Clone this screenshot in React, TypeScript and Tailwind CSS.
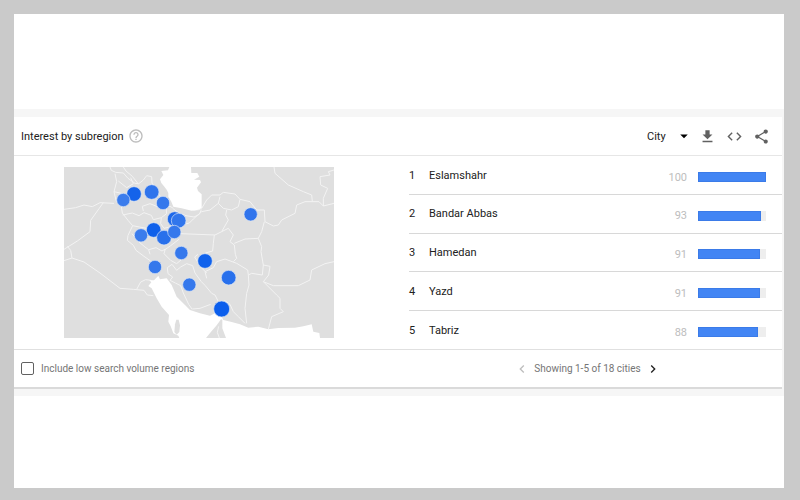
import { useState } from "react";
import {
  MdArrowDropDown,
  MdChevronLeft,
  MdChevronRight,
  MdCode,
  MdFileDownload,
  MdHelpOutline,
  MdShare,
} from "react-icons/md";

interface City {
  rank: number;
  name: string;
  value: number;
}

const cities: City[] = [
  { rank: 1, name: "Eslamshahr", value: 100 },
  { rank: 2, name: "Bandar Abbas", value: 93 },
  { rank: 3, name: "Hamedan", value: 91 },
  { rank: 4, name: "Yazd", value: 91 },
  { rank: 5, name: "Tabriz", value: 88 },
];

// x, y, radius, fill
const markers: [number, number, number, string][] = [
  [210, 81, 22, "#1463ea"],
  [178, 99, 20, "#3b7cec"],
  [263, 75, 22, "#2f74ec"],
  [297, 108, 20, "#3578ec"],
  [332, 156, 22, "#1f69ea"],
  [344, 161, 22, "#3176ec"],
  [269, 189, 22, "#0f60ea"],
  [231, 205, 20, "#3b7cec"],
  [300, 212, 22, "#2970eb"],
  [331, 195, 20, "#3578ec"],
  [352, 258, 20, "#3578ec"],
  [273, 300, 20, "#3578ec"],
  [376, 353, 20, "#3578ec"],
  [423, 282, 22, "#1062ec"],
  [494, 332, 22, "#2870ec"],
  [473, 426, 24, "#0b5eec"],
  [560, 142, 20, "#3074ec"],
];

const water = [
  "M316 0 L312 10 L292 12 L298 24 L288 37 L292 48 L300 58 L308 68 L313 78 L313 89 L322 104 L328 119 L353 124 L383 131 L402 128 L413 123 L413 82 L402 72 L399 62 L411 46 L408 39 L390 38 L406 29 L400 18 L382 18 L381 0 Z",
  "M283 326 L288 337 L308 334 L323 354 L338 389 L363 414 L378 429 L408 439 L438 446 L453 439 L473 449 L478 459 L503 465 L528 472 L553 482 L583 479 L613 487 L643 483 L693 482 L718 478 L743 472 L748 494 L766 498 L768 513 L346 513 L343 506 L328 499 L320 478 L313 464 L315 444 L293 419 L278 394 L263 364 L253 357 L262 346 L256 340 L270 340 Z",
];

const islands = [
  "M333 472 L337 458 L344 458 L348 475 L346 495 L338 503 L331 495 Z",
  "M426 513 L440 496 L458 475 L471 457 L475 458 L475 484 L486 513 Z",
];

const borders = [
  "M138 0 L142 10 L155 16 L178 18 L192 34 L213 49 L223 50",
  "M178 0 L186 12 L205 28 L223 51 L238 39 L248 26 L263 29 L264 48 L280 76 L292 92",
  "M153 20 L158 44 L150 74 L156 100 L172 118 L175 138 L192 160 L206 176 L192 205 L190 220 L208 235 L216 250 L240 268 L260 282",
  "M163 42 L188 62 L208 50 L200 32 M150 74 L176 80",
  "M0 127 L35 122 L60 114 L85 119 L108 107 L150 109",
  "M0 247 L40 222 L78 194 L80 160 L105 125 L118 107",
  "M10 238 L20 250 L24 273 L60 285 L108 318 L168 364 L208 367 L240 370 L250 384 L268 386",
  "M0 281 L24 273",
  "M218 367 L230 345 L245 338 L262 340",
  "M176 144 L205 138 L225 146 L240 137 L262 145 L268 158 L292 152 L308 140 L306 122",
  "M238 132 L235 118 L258 110 L288 122 L318 118 L328 124",
  "M206 176 L226 180 L248 184 M204 200 L224 224 L243 240 L254 248 L276 242 L294 252 L304 246",
  "M254 248 L258 262 M292 152 L290 170 L300 184 L318 180",
  "M300 250 L320 236 L346 216 M304 246 L300 260 L320 280 L338 290 L352 278",
  "M328 126 L345 138 L366 146 L390 150 L406 142 L412 128",
  "M388 156 L376 168 L360 172",
  "M310 302 L324 292 L338 310 L350 300 L368 290 L386 296 L393 318 L412 344 L423 355 L443 379 L453 384 L462 402",
  "M310 302 L312 320 L326 330 L318 340 L334 348 L350 356 L358 378 L374 412 L384 426",
  "M385 426 L408 424 L440 412 M481 400 L498 412 L508 434 L523 449 L543 469",
  "M388 156 L413 134 L438 129 L463 109 L468 89 M388 130 L405 128 L413 124 L428 99 L443 84 L468 84 L478 76 L513 81 L528 97 L558 104 L578 129 L601 129 L603 164 L628 177 L643 174 L653 159 L693 139 L698 114 L723 104 L765 104 L778 117 L810 109",
  "M463 109 L478 124 L503 129 L523 119 L528 97",
  "M630 0 L633 19 L673 54 L718 74 L743 84 L745 104",
  "M810 9 L793 14 L798 24 L768 29 L770 54 L791 64 L778 94 L778 117",
  "M488 129 L485 144 L493 159 L473 194 L453 204 L350 200",
  "M473 194 L493 184 L508 204 L498 224 L511 234 L514 262 L518 274 L508 284",
  "M511 229 L543 216 L583 214 L593 194 L601 164 M583 214 L593 239 L591 254 L598 294 L618 298 L614 324 L598 344 L628 356 L703 356 L738 339 L743 309 L783 290 L810 284",
  "M451 204 L448 229 L446 252 L424 258 M402 262 L392 270 L410 300 L428 318",
  "M598 344 L638 384 L648 394 L648 424 L658 434 L623 449 L613 487",
  "M598 294 L595 324 L563 319 L553 324 L551 309 L518 289 L483 276 L458 284 L448 302 L423 314 L428 334",
  "M553 324 L555 354 L548 379 L543 424 L548 469",
];

const RegionMap = () => (
  <svg
    viewBox="0 0 810 513"
    role="img"
    aria-label="Interest by city"
    className="w-full max-w-[270px]"
  >
    <rect width="810" height="513" fill="#dfdfdf" />
    <g fill="none" stroke="#f3f3f3" strokeWidth="3" strokeLinejoin="round">
      {borders.map((d) => (
        <path key={d} d={d} />
      ))}
    </g>
    {water.map((d) => (
      <path key={d} d={d} fill="#fff" />
    ))}
    {islands.map((d) => (
      <path key={d} d={d} fill="#dfdfdf" />
    ))}
    <path d="M464 478 L460 496 L466 513" fill="none" stroke="#f3f3f3" strokeWidth="3" />
    {markers.map(([x, y, r, fill]) => (
      <circle
        key={`${x}-${y}`}
        cx={x}
        cy={y}
        r={r}
        fill={fill}
        stroke="#dce6f5"
        strokeWidth="2"
      />
    ))}
  </svg>
);

const CityRow = ({ rank, name, value }: City) => (
  <tr className="border-b border-[#d8d8d8] last:border-b-0">
    <td className="w-5 pt-[2px]">{rank}</td>
    <td className="pt-[2px]">{name}</td>
    <td className="pt-[6px] pr-[11px] text-right text-[#bdbdbd]">{value}</td>
    <td className="w-[84px] pt-1 pr-4">
      <div className="h-[10px] bg-[#eeeeee]">
        <div
          className="h-full border border-[#3b7be8] bg-[#4285f4]"
          style={{ width: `${value}%` }}
        />
      </div>
    </td>
  </tr>
);

export default function App() {
  const [resolution, setResolution] = useState("City");
  const [lowVolume, setLowVolume] = useState(false);

  return (
    <div className="flex min-h-screen bg-[#cacaca] pt-[14px] pr-4 pb-3 pl-[14px] font-[Roboto,sans-serif] text-[#212121]">
      <main className="w-full bg-white pt-[95px]">
        <div className="bg-[#f6f6f6] pt-2 pr-[2px] pb-[7px]">
          <section className="border-b-2 border-[#dadada] bg-white">
            <header className="flex h-[39px] items-center border-b border-[#e6e6e6] pr-3 pl-[7px]">
              <h2 className="pt-[2px] text-[11px]">Interest by subregion</h2>
              <button type="button" aria-label="Help" className="ml-1 text-[#bdbdbd]">
                <MdHelpOutline size={16} />
              </button>
              <div className="ml-auto flex items-center">
                <div className="relative mr-[6px] flex items-center">
                  <select
                    aria-label="Resolution"
                    value={resolution}
                    onChange={(e) => setResolution(e.target.value)}
                    className="w-[46px] appearance-none bg-transparent pt-[2px] text-[11px] outline-none"
                  >
                    <option>City</option>
                    <option>Subregion</option>
                  </select>
                  <MdArrowDropDown
                    size={18}
                    className="pointer-events-none absolute right-0 text-black"
                  />
                </div>
                <div className="flex items-center gap-[10px] text-[#616161]">
                  <button type="button" aria-label="Download">
                    <MdFileDownload size={17} />
                  </button>
                  <button type="button" aria-label="Embed">
                    <MdCode size={17} />
                  </button>
                  <button type="button" aria-label="Share">
                    <MdShare size={17} />
                  </button>
                </div>
              </div>
            </header>

            <div className="grid grid-cols-[370fr_373fr] gap-[25px]">
              <div className="flex items-center justify-center">
                <RegionMap />
              </div>
              <table className="h-[193px] w-full border-collapse text-[11px]">
                <tbody>
                  {cities.map((city) => (
                    <CityRow key={city.rank} {...city} />
                  ))}
                </tbody>
              </table>
            </div>

            <footer className="grid h-[38px] grid-cols-[370fr_373fr] items-center gap-[25px] border-t border-[#e0e0e0] text-[10px] text-[#757575]">
              <label className="flex items-center gap-[7px] pl-[7px]">
                <input
                  type="checkbox"
                  checked={lowVolume}
                  onChange={(e) => setLowVolume(e.target.checked)}
                  className="size-[13px] appearance-none rounded-[2px] border border-[#616161] checked:bg-[#4285f4]"
                />
                Include low search volume regions
              </label>
              <div className="flex items-center justify-center gap-1 pr-4">
                <button type="button" aria-label="Previous" disabled className="text-[#bdbdbd]">
                  <MdChevronLeft size={16} />
                </button>
                <span>Showing 1-5 of 18 cities</span>
                <button type="button" aria-label="Next" className="text-[#212121]">
                  <MdChevronRight size={16} />
                </button>
              </div>
            </footer>
          </section>
        </div>
      </main>
    </div>
  );
}
